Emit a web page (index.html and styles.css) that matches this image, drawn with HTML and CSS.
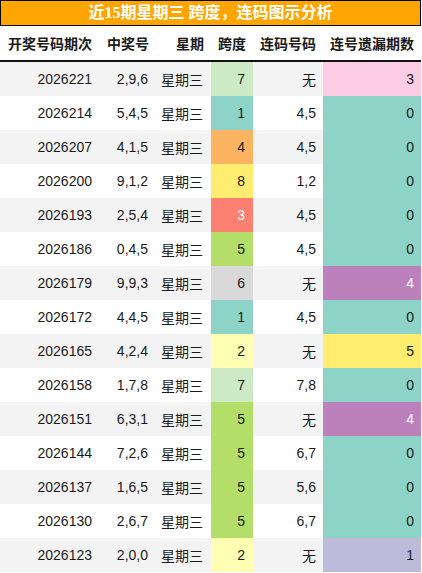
FILE: index.html
```html
<!DOCTYPE html>
<html lang="zh-CN">
<head>
    <meta charset="UTF-8">
    <title>近15期星期三 跨度，连码图示分析</title>
    <link rel="stylesheet" href="styles.css">
</head>
<body>
    <div class="title">近15期星期三 跨度，连码图示分析</div>
    <table class="stats">
        <colgroup>
            <col class="c1"><col class="c2"><col class="c3"><col class="c4"><col class="c5"><col class="c6">
        </colgroup>
        <thead>
            <tr>
                <th class="left">开奖号码期次</th>
                <th>中奖号</th>
                <th>星期</th>
                <th class="mid">跨度</th>
                <th class="mid">连码号码</th>
                <th class="mid">连号遗漏期数</th>
            </tr>
        </thead>
        <tbody>
            <tr><td>2026221</td><td>2,9,6</td><td>星期三</td><td class="s7">7</td><td>无</td><td class="m3">3</td></tr>
            <tr><td>2026214</td><td>5,4,5</td><td>星期三</td><td class="s1">1</td><td>4,5</td><td class="m0">0</td></tr>
            <tr><td>2026207</td><td>4,1,5</td><td>星期三</td><td class="s4">4</td><td>4,5</td><td class="m0">0</td></tr>
            <tr><td>2026200</td><td>9,1,2</td><td>星期三</td><td class="s8">8</td><td>1,2</td><td class="m0">0</td></tr>
            <tr><td>2026193</td><td>2,5,4</td><td>星期三</td><td class="s3">3</td><td>4,5</td><td class="m0">0</td></tr>
            <tr><td>2026186</td><td>0,4,5</td><td>星期三</td><td class="s5">5</td><td>4,5</td><td class="m0">0</td></tr>
            <tr><td>2026179</td><td>9,9,3</td><td>星期三</td><td class="s6">6</td><td>无</td><td class="m4">4</td></tr>
            <tr><td>2026172</td><td>4,4,5</td><td>星期三</td><td class="s1">1</td><td>4,5</td><td class="m0">0</td></tr>
            <tr><td>2026165</td><td>4,2,4</td><td>星期三</td><td class="s2">2</td><td>无</td><td class="m5">5</td></tr>
            <tr><td>2026158</td><td>1,7,8</td><td>星期三</td><td class="s7">7</td><td>7,8</td><td class="m0">0</td></tr>
            <tr><td>2026151</td><td>6,3,1</td><td>星期三</td><td class="s5">5</td><td>无</td><td class="m4">4</td></tr>
            <tr><td>2026144</td><td>7,2,6</td><td>星期三</td><td class="s5">5</td><td>6,7</td><td class="m0">0</td></tr>
            <tr><td>2026137</td><td>1,6,5</td><td>星期三</td><td class="s5">5</td><td>5,6</td><td class="m0">0</td></tr>
            <tr><td>2026130</td><td>2,6,7</td><td>星期三</td><td class="s5">5</td><td>6,7</td><td class="m0">0</td></tr>
            <tr><td>2026123</td><td>2,0,0</td><td>星期三</td><td class="s2">2</td><td>无</td><td class="m1">1</td></tr>
        </tbody>
    </table>
</body>
</html>
```

FILE: styles.css
```css
body {
    margin: 0;
    width: 422px;
    font-family: "Liberation Sans", "Noto Sans CJK SC", sans-serif;
    color: #1a1a1a;
    background: #fff;
}
.title {
    width: 419px;
    height: 24px;
    line-height: 24px;
    background: #ffa500;
    border: 1px solid #000;
    color: #fff;
    font-family: "Liberation Serif", "Noto Sans CJK SC", serif;
    font-weight: bold;
    font-size: 16px;
    text-align: center;
}
.stats {
    width: 421px;
    border-collapse: collapse;
    table-layout: fixed;
    font-size: 14px;
}
.c1 { width: 100px; }
.c2 { width: 56px; }
.c3 { width: 55px; }
.c4 { width: 42px; }
.c5 { width: 70px; }
.c6 { width: 98px; }
.stats th {
    height: 34px;
    padding: 0 7px 0 0;
    font-weight: bold;
    font-size: 14px;
    text-align: right;
    border-bottom: 2px solid #111;
    white-space: nowrap;
}
.stats th.left { text-align: left; padding-left: 8px; }
.stats th.mid { text-align: center; padding: 0; }
.stats td {
    height: 34px;
    padding: 0 8px 0 0;
    text-align: right;
    white-space: nowrap;
}
.stats td:nth-child(5), .stats td:nth-child(6) { padding-right: 7px; }
.stats tbody tr:nth-child(odd) { background: #f3f3f3; }

.s1 { background: #8dd3c7; }
.s2 { background: #ffffb3; }
.s3 { background: #fb8072; color: #fff; }
.s4 { background: #fdb462; }
.s5 { background: #b3de69; }
.s6 { background: #d9d9d9; }
.s7 { background: #ccebc5; }
.s8 { background: #ffed6f; }
.m0 { background: #8dd3c7; }
.m1 { background: #bebada; }
.m3 { background: #fccde5; }
.m4 { background: #bc80bd; color: #fff; }
.m5 { background: #ffed6f; }
```
